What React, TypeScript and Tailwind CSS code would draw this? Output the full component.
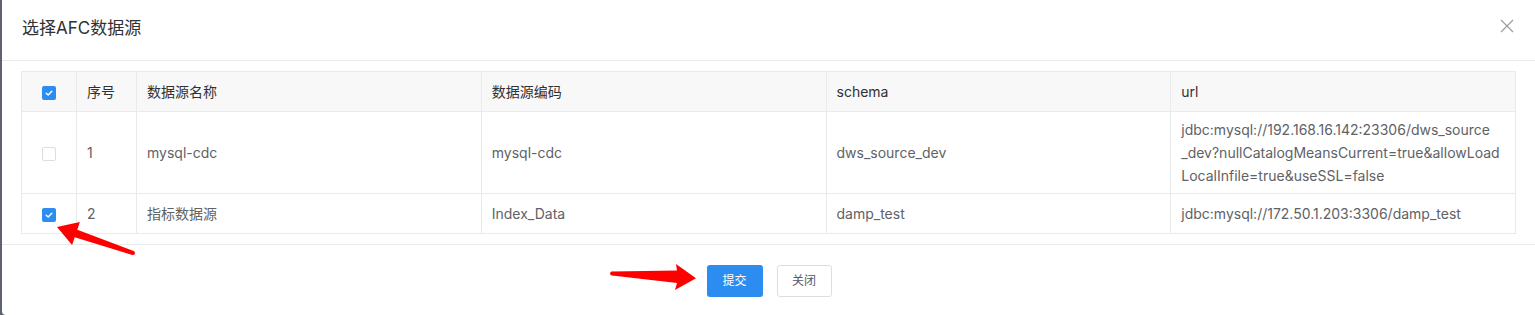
import React from "react";

const font = { fontFamily: 'Inter, "Noto Sans CJK SC", sans-serif' };

function Checkbox({ checked }: { checked: boolean }) {
  return checked ? (
    <span className="inline-flex w-[14px] h-[14px] rounded-[2px] bg-[#2d8cf0] items-center justify-center align-middle">
      <svg width="10" height="10" viewBox="0 0 10 10">
        <path d="M2.2 5.2 L4.2 7 L7.8 3.2" fill="none" stroke="#fff" strokeWidth="1.4" strokeLinecap="round" strokeLinejoin="round" />
      </svg>
    </span>
  ) : (
    <span className="inline-block w-[14px] h-[14px] rounded-[2px] border border-[#dcdee2] bg-white align-middle" />
  );
}

const rows = [
  {
    checked: false,
    idx: "1",
    name: "mysql-cdc",
    code: "mysql-cdc",
    schema: "dws_source_dev",
    url: [
      "jdbc:mysql://192.168.16.142:23306/dws_source",
      "_dev?nullCatalogMeansCurrent=true&allowLoad",
      "LocalInfile=true&useSSL=false",
    ],
  },
  {
    checked: true,
    idx: "2",
    name: "指标数据源",
    code: "Index_Data",
    schema: "damp_test",
    url: ["jdbc:mysql://172.50.1.203:3306/damp_test"],
  },
];

export default function App() {
  return (
    <div className="relative w-[1535px] h-[315px] bg-[#5f636b] pl-[2px] overflow-hidden" style={font}>
      <div className="h-full bg-white rounded-bl-[4px] flex flex-col">
        <div className="h-[61px] shrink-0 border-b border-[#e8eaec] pl-[20px] pr-[21px] flex items-center justify-between">
          <span className="text-[17px] text-[#303133] mt-[-3px]">选择AFC数据源</span>
          <svg width="14" height="14" viewBox="0 0 14 14" className="mt-[-8px]">
            <path d="M1 1 L13 13 M13 1 L1 13" stroke="#9a9ca3" strokeWidth="1.2" />
          </svg>
        </div>
        <div className="px-[19px] pt-[10px] pb-[10px]">
          <table className="w-full table-fixed border-collapse text-[14px]">
            <colgroup>
              <col className="w-[55px]" />
              <col className="w-[60px]" />
              <col />
              <col />
              <col />
              <col />
            </colgroup>
            <thead>
              <tr className="bg-[#f8f8f9] text-[#303133] h-[40px]">
                <th className="border border-[#e8eaec] text-center font-normal">
                  <Checkbox checked />
                </th>
                <th className="border border-[#e8eaec] text-left font-normal pl-[10px]">序号</th>
                <th className="border border-[#e8eaec] text-left font-normal pl-[10px]">数据源名称</th>
                <th className="border border-[#e8eaec] text-left font-normal pl-[10px]">数据源编码</th>
                <th className="border border-[#e8eaec] text-left font-normal pl-[10px]">schema</th>
                <th className="border border-[#e8eaec] text-left font-normal pl-[10px]">url</th>
              </tr>
            </thead>
            <tbody className="text-[#606266]">
              {rows.map((r) => (
                <tr key={r.idx} className="h-[40px]">
                  <td className="border border-[#e8eaec] text-center">
                    <Checkbox checked={r.checked} />
                  </td>
                  <td className="border border-[#e8eaec] pl-[10px]">{r.idx}</td>
                  <td className="border border-[#e8eaec] pl-[10px]">{r.name}</td>
                  <td className="border border-[#e8eaec] pl-[10px]">{r.code}</td>
                  <td className="border border-[#e8eaec] pl-[10px]">{r.schema}</td>
                  <td className="border border-[#e8eaec] pl-[10px] py-[6px] leading-[23px]">
                    {r.url.map((l) => (
                      <div key={l} className="whitespace-nowrap">{l}</div>
                    ))}
                  </td>
                </tr>
              ))}
            </tbody>
          </table>
        </div>
        <div className="border-t border-[#e8eaec] pt-[20px] flex justify-center gap-[14px] pl-[1px]">
          <button className="w-[56px] h-[32px] rounded-[3px] bg-[#2d8cf0] text-white text-[12px]">提交</button>
          <button className="w-[55px] h-[32px] rounded-[3px] border border-[#dcdee2] bg-white text-[#515a6e] text-[12px]">关闭</button>
        </div>
      </div>
      <svg className="absolute left-0 top-0 pointer-events-none" width="1535" height="315" viewBox="0 0 1535 315">
        <polygon points="57,227 79.9,222.1 77.3,229.7 133.6,251.1 132.4,254.9 74.7,237.3 72.1,244.9" fill="#ff0000" />
        <circle cx="133" cy="253" r="2" fill="#ff0000" />
        <polygon points="612,271.6 677,270.5 676,264 696,278.3 675,290 677,283 612,275.4" fill="#ff0000" />
        <circle cx="612" cy="273.5" r="1.9" fill="#ff0000" />
      </svg>
    </div>
  );
}
